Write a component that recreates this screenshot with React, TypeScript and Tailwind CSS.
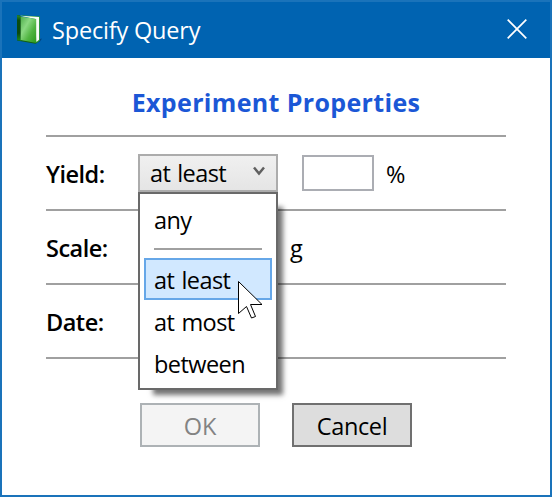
import type { ReactNode } from 'react';

function BookIcon() {
  return (
    <svg width="28" height="30" viewBox="0 0 28 30" className="block">
      <defs>
        <linearGradient id="cover" x1="0" y1="0" x2="1" y2="1">
          <stop offset="0" stopColor="#4fae4c" />
          <stop offset="0.35" stopColor="#8ad882" />
          <stop offset="0.65" stopColor="#50b440" />
          <stop offset="1" stopColor="#2b9a1b" />
        </linearGradient>
        <linearGradient id="spine" x1="0" y1="0" x2="0" y2="1">
          <stop offset="0" stopColor="#2a8a2c" />
          <stop offset="0.2" stopColor="#0a4d10" />
          <stop offset="0.7" stopColor="#0b4a10" />
          <stop offset="1" stopColor="#1c8a1f" />
        </linearGradient>
      </defs>
      <path d="M21 25 L27 23.500 L25 26.500 L21 28.500Z" fill="#00305f" opacity="0.6" />
      <path d="M2 0 L5 0.500 L22 27.500 L20.500 28.800 L2 25.500Z" fill="#12600f" />
      <path d="M4.500 0.300 L24.800 1.600 L24.800 25.500 L21.500 28.300 L20 4Z" fill="#35a02c" />
      <path d="M5 0.800 L24 2 L24 24.800 L21.200 27 L20.500 4Z" fill="#fafcf8" />
      <path d="M2 0.300 L6 1.300 L6 25.800 L2 24.800Z" fill="url(#spine)" />
      <path d="M5.700 1.500 L21.200 4 L21.200 28 L5.700 25Z" fill="url(#cover)" />
    </svg>
  );
}

function Row({ label, children }: { label: string; children?: ReactNode }) {
  return (
    <div className="flex h-[74px] items-start border-b-2 border-[#a0a0a0]">
      <div className="mt-[21px] w-[92px] text-[23.5px] leading-8 font-[550] tracking-[-0.5px]">{label}</div>
      {children}
    </div>
  );
}

function Menu() {
  return (
    <div className="absolute top-[38px] left-0 z-10 h-[198px] w-[140px] border-2 border-[#696969] bg-white px-1 tracking-[-0.55px] [word-spacing:1.5px] shadow-[10px_10px_5px_-5px_rgba(0,0,0,0.55)]">
      <div className="mt-[10px] pl-[10px] leading-8">any</div>
      <div className="mx-[10px] mt-3 h-0.5 bg-[#a0a0a0]" />
      <div className="mt-2 h-[42px] border-2 border-[#66a7e8] bg-[#d1e8ff] pl-2 leading-10">at least</div>
      <div className="h-[42px] pl-[10px] leading-[44px]">at most</div>
      <div className="h-[42px] pl-[10px] leading-[44px]">between</div>
      <svg className="absolute top-[86px] left-[97px]" width="27" height="40" viewBox="0 0 27 40">
        <path d="M1.500 1.500 V33.500 L9.500 26.500 L14.500 38 L18.500 36.500 L13.500 24.500 H25Z" fill="white" stroke="black" />
      </svg>
    </div>
  );
}

export default function App() {
  return (
    <div className="flex h-[497px] w-[552px] flex-col border-2 border-[#1a73ba] bg-white font-['Open_Sans','Noto_Sans',sans-serif] text-[23.5px] text-black">
      <header className="flex h-14 shrink-0 items-center bg-[#0063b1] pr-[23px] pl-[13px] text-white">
        <BookIcon />
        <span className="ml-[9px] leading-8 tracking-[-0.18px]">Specify Query</span>
        <svg className="mb-0.5 ml-auto" width="20" height="20" viewBox="0 0 20 20">
          <path d="M0.700 0.700 L19.300 19.300 M19.300 0.700 L0.700 19.300" stroke="white" strokeWidth="1.700" />
        </svg>
      </header>
      <main className="px-11">
        <h1 className="flex h-[79px] items-center justify-center border-b-2 border-[#a0a0a0] pt-[13px] text-[25px] font-bold tracking-[0.35px] whitespace-nowrap text-[#1b57d6]">Experiment Properties</h1>
        <Row label="Yield:">
          <div className="relative mt-[17px] h-[38px] w-[140px]">
            <div className="flex h-[38px] items-center justify-between border-2 border-[#acacac] bg-linear-to-b from-[#f0f0f0] to-[#e5e5e5] pr-[11px] pl-[10px]">
              <span className="leading-8 tracking-[-0.6px] [word-spacing:1.5px]">at least</span>
              <svg width="12" height="10" viewBox="0 0 12 10" className="-mt-[5px]">
                <path d="M1 1.500 L6 7.500 L11 1.500" fill="none" stroke="#606060" strokeWidth="2.500" />
              </svg>
            </div>
            <Menu />
          </div>
          <input className="mt-[18px] ml-6 h-9 w-[72px] border-2 border-[#abadb3] bg-white" />
          <span className="mt-[21px] ml-3 leading-8">%</span>
        </Row>
        <Row label="Scale:">
          <span className="mt-[21px] ml-[152px] leading-8">g</span>
        </Row>
        <Row label="Date:" />
        <div className="mt-11 flex justify-start gap-8 pl-[94px]">
          <button className="h-11 w-[120px] border-2 border-[#adb2b5] bg-[#f4f4f4] pt-[3px] text-[#838383]">OK</button>
          <button className="h-11 w-[120px] border-2 border-[#707070] bg-[#dddddd] pt-[3px] tracking-[-0.35px]">Cancel</button>
        </div>
      </main>
    </div>
  );
}
